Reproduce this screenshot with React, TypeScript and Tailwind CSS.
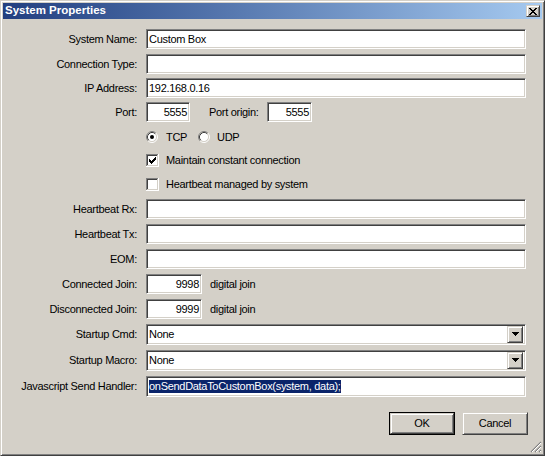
import React from "react";

const FONT = { fontFamily: '"Liberation Sans", Arial, sans-serif' };

// classic sunken field: gray/dark top-left, white/light bottom-right
const SUNKEN =
  "border border-t-[#808080] border-l-[#808080] border-r-white border-b-white shadow-[inset_1px_1px_0_#404040,inset_-1px_-1px_0_#d4d0c8] bg-white";
const RAISED =
  "border border-t-[#d4d0c8] border-l-[#d4d0c8] border-r-[#404040] border-b-[#404040] shadow-[inset_1px_1px_0_#ffffff,inset_-1px_-1px_0_#808080] bg-[#d4d0c8]";

function Label({ children }: { children: React.ReactNode }) {
  return <div className="w-[134px] shrink-0 text-right">{children}</div>;
}

function Field({ value, className = "w-[380px]", right = false }: { value?: string; className?: string; right?: boolean }) {
  return (
    <div className={`${SUNKEN} ${className} h-[20px] flex items-center px-[2px] ${right ? "justify-end" : ""}`}>
      <span className="leading-none">{value}</span>
    </div>
  );
}

function Row({ label, mt, children }: { label?: string; mt: string; children: React.ReactNode }) {
  return (
    <div className={`flex items-center h-[20px] ${mt}`}>
      <Label>{label}</Label>
      <div className="ml-[9px] flex items-center">{children}</div>
    </div>
  );
}

function Radio({ checked }: { checked?: boolean }) {
  return (
    <svg width="12" height="12" viewBox="0 0 12 12" className="shrink-0">
      <circle cx="6" cy="6" r="4.5" fill="#fff" />
      <path d="M2.11 9.89 A5.5 5.5 0 0 1 9.89 2.11" fill="none" stroke="#808080" />
      <path d="M9.89 2.11 A5.5 5.5 0 0 1 2.11 9.89" fill="none" stroke="#ffffff" />
      <path d="M2.82 9.18 A4.5 4.5 0 0 1 9.18 2.82" fill="none" stroke="#404040" />
      <path d="M9.18 2.82 A4.5 4.5 0 0 1 2.82 9.18" fill="none" stroke="#d4d0c8" />
      {checked && <circle cx="6" cy="6" r="2" fill="#000" />}
    </svg>
  );
}

const CHECK = [
  [3, 5, 3], [4, 6, 3], [5, 7, 3], [6, 6, 3], [7, 5, 3], [8, 4, 3], [9, 3, 3],
];

function Checkbox({ checked }: { checked?: boolean }) {
  return (
    <svg width="13" height="13" viewBox="0 0 13 13" shapeRendering="crispEdges" className="shrink-0">
      <rect x="0" y="0" width="13" height="13" fill="#fff" />
      <rect x="0" y="0" width="12" height="1" fill="#808080" />
      <rect x="0" y="0" width="1" height="12" fill="#808080" />
      <rect x="1" y="1" width="10" height="1" fill="#404040" />
      <rect x="1" y="1" width="1" height="10" fill="#404040" />
      <rect x="1" y="11" width="11" height="1" fill="#d4d0c8" />
      <rect x="11" y="1" width="1" height="11" fill="#d4d0c8" />
      {checked && CHECK.map(([x, y, h]) => <rect key={x} x={x} y={y} width="1" height={h} fill="#000" />)}
    </svg>
  );
}

function Select({ value }: { value: string }) {
  return (
    <div className={`${SUNKEN} w-[380px] h-[21px] flex items-center pl-[2px] pr-[2px]`}>
      <span className="flex-1 leading-none">{value}</span>
      <div className={`${RAISED} w-[16px] h-[17px] flex items-center justify-center`}>
        <svg width="7" height="4" viewBox="0 0 7 4" shapeRendering="crispEdges">
          <path d="M0 0h7v1h-1v1h-1v1h-1v1h-1v-1h-1v-1h-1v-1h-1z" fill="#000" />
        </svg>
      </div>
    </div>
  );
}

export default function App() {
  return (
    <div className="w-[545px] h-[456px] text-[11px] tracking-[-0.3px] text-black" style={FONT}>
      <div className="relative flex flex-col h-full bg-[#d4d0c8] border border-t-[#d4d0c8] border-l-[#d4d0c8] border-r-[#404040] border-b-[#404040] shadow-[inset_1px_1px_0_#ffffff,inset_-1px_-1px_0_#808080] p-[2px]">
        {/* title bar */}
        <div className="h-[16px] flex items-center justify-between bg-gradient-to-r from-[#233f80] to-[#a6caf0] pl-[2px] pr-[2px]">
          <span className="text-white font-bold text-[11.5px] tracking-normal leading-none">System Properties</span>
          <div className={`${RAISED} w-[14px] h-[12px] flex items-center justify-center`}>
            <svg width="8" height="7" viewBox="0 0 8 7" shapeRendering="crispEdges">
              <path d="M0 0h2v1h1v1h2v-1h1v-1h2v1h-1v1h-1v1h-1v1h1v1h1v1h1v1h-2v-1h-1v-1h-2v1h-1v1h-2v-1h1v-1h1v-1h1v-1h-1v-1h-1v-1h-1z" fill="#000" />
            </svg>
          </div>
        </div>

        <Row label="System Name:" mt="mt-[10px]">
          <Field value="Custom Box" />
        </Row>
        <Row label="Connection Type:" mt="mt-[5px]">
          <Field />
        </Row>
        <Row label="IP Address:" mt="mt-[4px]">
          <Field value="192.168.0.16" />
        </Row>
        <Row label="Port:" mt="mt-[4px]">
          <Field value="5555" className="w-[44px]" right />
          <div className="ml-[19px] w-[58px]">Port origin:</div>
          <Field value="5555" className="w-[45px]" right />
        </Row>

        <Row mt="mt-[5px]">
          <Radio checked />
          <span className="ml-[8px] w-[32px]">TCP</span>
          <Radio />
          <span className="ml-[7px]">UDP</span>
        </Row>
        <Row mt="mt-[3px]">
          <Checkbox checked />
          <span className="ml-[7px]">Maintain constant connection</span>
        </Row>
        <Row mt="mt-[4px]">
          <Checkbox />
          <span className="ml-[7px]">Heartbeat managed by system</span>
        </Row>

        <Row label="Heartbeat Rx:" mt="mt-[5px]">
          <Field />
        </Row>
        <Row label="Heartbeat Tx:" mt="mt-[5px]">
          <Field />
        </Row>
        <Row label="EOM:" mt="mt-[5px]">
          <Field />
        </Row>
        <Row label="Connected Join:" mt="mt-[5px]">
          <Field value="9998" className="w-[56px]" right />
          <span className="ml-[8px]">digital join</span>
        </Row>
        <Row label="Disconnected Join:" mt="mt-[5px]">
          <Field value="9999" className="w-[56px]" right />
          <span className="ml-[8px]">digital join</span>
        </Row>

        <Row label="Startup Cmd:" mt="mt-[5px]">
          <Select value="None" />
        </Row>
        <Row label="Startup Macro:" mt="mt-[6px]">
          <Select value="None" />
        </Row>
        <Row label="Javascript Send Handler:" mt="mt-[6px]">
          <div className={`${SUNKEN} w-[380px] h-[21px] flex items-center px-[2px]`}>
            <span className="bg-[#0a246a] text-white leading-[13px]">onSendDataToCustomBox(system, data);</span>
          </div>
        </Row>

        <div className="flex justify-end gap-[7px] pr-[14px] mt-[16px]">
          <div className="w-[66px] h-[23px] border border-black">
            <div className={`${RAISED} w-full h-full flex items-center justify-center`}>OK</div>
          </div>
          <div className={`${RAISED} w-[66px] h-[23px] flex items-center justify-center`}>Cancel</div>
        </div>

        {/* resize grip */}
        <svg width="12" height="12" viewBox="0 0 12 12" className="absolute right-[2px] bottom-[2px]">
          <path d="M11 1L1 11M11 5L5 11M11 9L9 11" stroke="#808080" strokeWidth="1.2" />
          <path d="M11 2L2 11M11 6L6 11M11 10L10 11" stroke="#ffffff" strokeWidth="1" />
        </svg>
      </div>
    </div>
  );
}
